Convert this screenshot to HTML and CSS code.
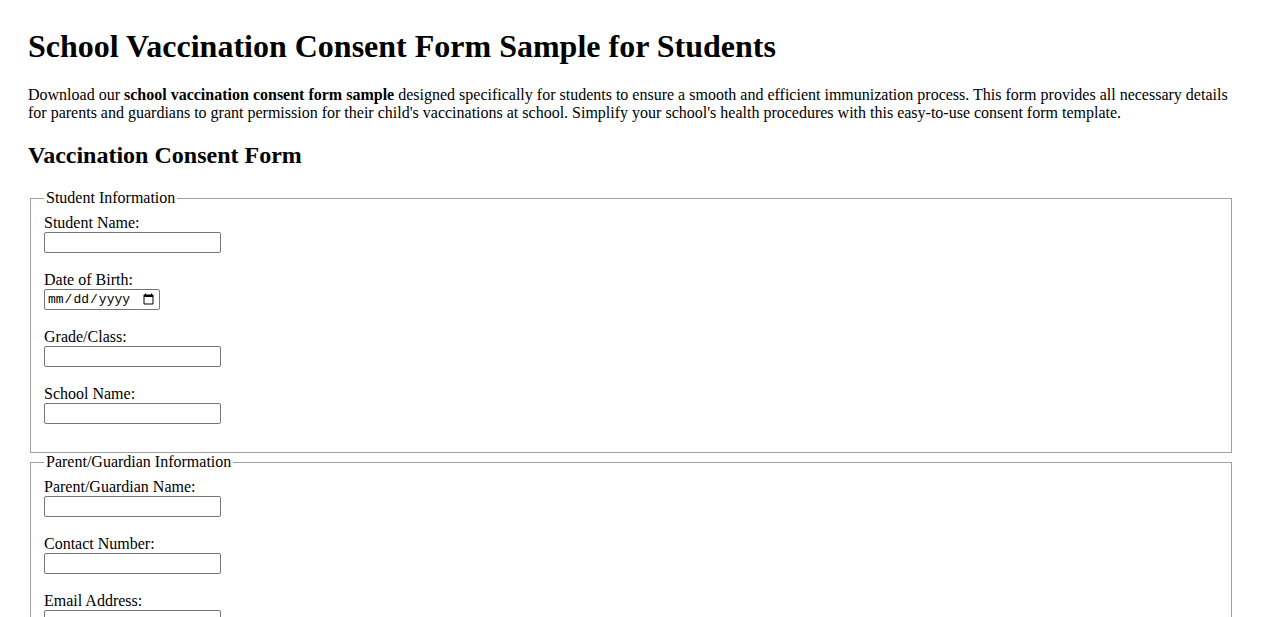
FILE: index.html
```html
<!DOCTYPE html>
<html lang="en">
<head>
<meta charset="utf-8">
<title>School Vaccination Consent Form Sample for Students</title>
<link rel="stylesheet" href="styles.css">
</head>
<body>
<h1>School Vaccination Consent Form Sample for Students</h1>
<p>Download our <strong>school vaccination consent form sample</strong> designed specifically for students to ensure a smooth and efficient immunization process. This form provides all necessary details for parents and guardians to grant permission for their child's vaccinations at school. Simplify your school's health procedures with this easy-to-use consent form template.</p>
<h2>Vaccination Consent Form</h2>
<form>
<fieldset>
<legend>Student Information</legend>
<label for="sn">Student Name:</label><br>
<input type="text" id="sn" class="txt"><br><br>
<label for="dob">Date of Birth:</label><br>
<input type="date" id="dob" class="date"><br><br>
<label for="gc">Grade/Class:</label><br>
<input type="text" id="gc" class="txt"><br><br>
<label for="sc">School Name:</label><br>
<input type="text" id="sc" class="txt"><br><br>
</fieldset>
<fieldset>
<legend>Parent/Guardian Information</legend>
<label for="pn">Parent/Guardian Name:</label><br>
<input type="text" id="pn" class="txt"><br><br>
<label for="cn">Contact Number:</label><br>
<input type="tel" id="cn" class="txt"><br><br>
<label for="em">Email Address:</label><br>
<input type="email" id="em" class="txt"><br><br>
</fieldset>
</form>
</body>
</html>
```
FILE: styles.css
```css
body {
  margin: 7px 28px 20px;
  font-family: "Liberation Serif", "Times New Roman", serif;
  font-size: 16px;
  color: #000;
}
h1 {
  font-size: 32px;
  margin: 21px 0;
}
h2 {
  font-size: 24px;
  margin: 20px 0;
}
p {
  margin: 16px 0;
}
fieldset {
  margin: 0 3px 0 2px;
  padding: 7px 12px 10px 13px;
  border: 1px solid #a0a0a0;
}
legend {
  padding: 0 2px;
}
.txt, .date {
  box-sizing: border-box;
  height: 21px;
  border: 1px solid #767676;
  border-radius: 2px;
  padding: 1px 2px;
  font-family: "Liberation Mono", monospace;
  font-size: 13px;
  margin: 0;
}
.txt { width: 177px; }
.date { width: 116px; }
```
